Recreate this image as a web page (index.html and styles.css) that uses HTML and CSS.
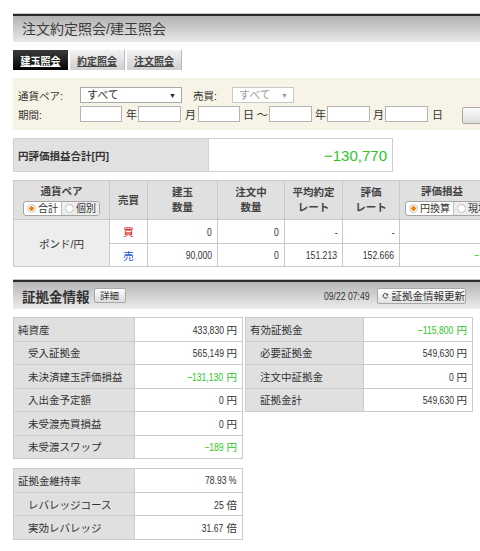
FILE: index.html
```html
<!DOCTYPE html>
<html lang="ja">
<head>
    <meta charset="UTF-8">
    <meta name="viewport" content="width=device-width, initial-scale=1.0">
    <title>注文約定照会/建玉照会</title>
    <link rel="stylesheet" href="styles.css">
</head>
<body>
    <div class="page">
        <!-- Title -->
        <div class="title-bar">
            <h1>注文約定照会/建玉照会</h1>
        </div>

        <!-- Tabs -->
        <div class="tabs">
            <a class="tab active">建玉照会</a>
            <a class="tab">約定照会</a>
            <a class="tab">注文照会</a>
        </div>

        <!-- Search conditions -->
        <div class="filter">
            <div class="filter-row">
                <span class="filter-label">通貨ペア:</span>
                <span class="select pair-select">すべて<span class="arrow">▼</span></span>
                <span class="filter-label side-label">売買:</span>
                <span class="select side-select disabled">すべて<span class="arrow">▼</span></span>
            </div>
            <div class="filter-row">
                <span class="filter-label">期間:</span>
                <span class="date-input w42"></span><span class="unit u16">年</span>
                <span class="date-input w43"></span><span class="unit u17">月</span>
                <span class="date-input w42"></span><span class="unit u29">日 ～</span>
                <span class="date-input w43"></span><span class="unit u15">年</span>
                <span class="date-input w43"></span><span class="unit u15">月</span>
                <span class="date-input w43"></span><span class="unit u34">日</span>
                <span class="search-btn"></span>
            </div>
        </div>

        <!-- Total P/L -->
        <div class="total">
            <div class="total-label">円評価損益合計[円]</div>
            <div class="total-value">−130,770</div>
        </div>

        <!-- Positions -->
        <table class="positions">
            <colgroup>
                <col style="width: 96px">
                <col style="width: 38px">
                <col style="width: 70px">
                <col style="width: 67px">
                <col style="width: 58px">
                <col style="width: 57px">
                <col style="width: 85px">
            </colgroup>
            <tr class="head">
                <th>
                    <div>通貨ペア</div>
                    <span class="seg"><span class="seg-item on"><i class="radio"></i>合計</span><span class="seg-item"><i class="radio"></i>個別</span></span>
                </th>
                <th>売買</th>
                <th>建玉<br>数量</th>
                <th>注文中<br>数量</th>
                <th>平均約定<br>レート</th>
                <th>評価<br>レート</th>
                <th>
                    <div>評価損益</div>
                    <span class="seg"><span class="seg-item on"><i class="radio"></i>円換算</span><span class="seg-item"><i class="radio"></i>現地</span></span>
                </th>
            </tr>
            <tr class="row1">
                <td class="pair" rowspan="2">ポンド/円</td>
                <td class="buy">買</td>
                <td class="num"><span class="n">0</span></td>
                <td class="num"><span class="n">0</span></td>
                <td class="num"><span class="n">-</span></td>
                <td class="num"><span class="n">-</span></td>
                <td class="num"></td>
            </tr>
            <tr class="row2">
                <td class="sell">売</td>
                <td class="num"><span class="n">90,000</span></td>
                <td class="num"><span class="n">0</span></td>
                <td class="num"><span class="n">151.213</span></td>
                <td class="num"><span class="n">152.666</span></td>
                <td class="num plus"><span class="n">−</span></td>
            </tr>
        </table>

        <!-- Margin info header -->
        <div class="section-bar">
            <div class="bar-inner">
                <h2>証拠金情報</h2>
                <span class="small-btn">詳細</span>
                <span class="updated"><span class="n">09/22 07:49</span></span>
                <span class="refresh-btn">
                    <svg width="10" height="10" viewBox="0 0 10 10">
                        <path d="M7.9 2.3 A3.6 3.6 0 1 0 8.7 6" fill="none" stroke="#3a3a3a" stroke-width="1.5"/>
                        <path d="M9.4 0.6 L9.4 4.3 L5.7 4.3 Z" fill="#3a3a3a"/>
                    </svg>
                    証拠金情報更新
                </span>
            </div>
        </div>

        <!-- Margin tables -->
        <div class="margin-area">
            <div class="margin-left">
                <table class="info w-left">
                    <tr><td class="label">純資産</td><td class="value"><span class="n">433,830</span> 円</td></tr>
                    <tr><td class="label sub">受入証拠金</td><td class="value"><span class="n">565,149</span> 円</td></tr>
                    <tr><td class="label sub">未決済建玉評価損益</td><td class="value plus"><span class="n">−131,130</span> 円</td></tr>
                    <tr><td class="label sub">入出金予定額</td><td class="value"><span class="n">0</span> 円</td></tr>
                    <tr><td class="label sub">未受渡売買損益</td><td class="value"><span class="n">0</span> 円</td></tr>
                    <tr><td class="label sub">未受渡スワップ</td><td class="value plus"><span class="n">−189</span> 円</td></tr>
                </table>
                <table class="info w-left rate-table">
                    <tr><td class="label">証拠金維持率</td><td class="value"><span class="n">78.93 %</span></td></tr>
                    <tr><td class="label sub">レバレッジコース</td><td class="value"><span class="n">25</span> 倍</td></tr>
                    <tr><td class="label sub">実効レバレッジ</td><td class="value"><span class="n">31.67</span> 倍</td></tr>
                </table>
            </div>
            <table class="info w-right">
                <tr><td class="label">有効証拠金</td><td class="value plus"><span class="n">−115,800</span> 円</td></tr>
                <tr><td class="label sub">必要証拠金</td><td class="value"><span class="n">549,630</span> 円</td></tr>
                <tr><td class="label sub">注文中証拠金</td><td class="value"><span class="n">0</span> 円</td></tr>
                <tr><td class="label sub">証拠金計</td><td class="value"><span class="n">549,630</span> 円</td></tr>
            </table>
        </div>
    </div>
</body>
</html>
```

FILE: styles.css
```css
/* General Layout */
html {
    overflow: hidden;
}

body {
    margin: 0;
    font-family: "Liberation Sans", "Noto Sans CJK JP", sans-serif;
    font-size: 10.5px;
    color: #333;
    background-color: #fff;
}

.page {
    width: 530px;
    padding: 14px 0 0 13px;
}

/* narrow digits, like the bitmap font of the original */
.n {
    display: inline-block;
    transform: scaleX(0.82);
    transform-origin: right center;
}

/* Title bar */
.title-bar {
    height: 26px;
    border-top: 2px solid #2b2b2b;
    box-shadow: 0 -1px 0 #c4c4c4;
    background: linear-gradient(#b2b2b2, #e8e8e8);
}

.title-bar h1 {
    margin: 0;
    padding-left: 9px;
    font-size: 14px;
    font-weight: normal;
    line-height: 26px;
    color: #3a3a3a;
}

/* Tabs */
.tabs {
    display: flex;
    gap: 2px;
    height: 20px;
    margin-top: 8px;
}

.tab {
    width: 55px;
    display: flex;
    align-items: center;
    justify-content: center;
    font-size: 10px;
    font-weight: bold;
    text-decoration: underline;
    color: #444;
    background: linear-gradient(#f2f2f2, #d0d0d0);
    border-right: 1px solid #b8b8b8;
    box-sizing: border-box;
}

.tab.active {
    color: #fff;
    background: linear-gradient(#3a3a3a, #050505);
    border-right: none;
}

/* Search conditions */
.filter {
    height: 52px;
    margin-top: 8px;
    padding: 9px 0 0 5px;
    box-sizing: border-box;
    background-color: #f7f4e7;
}

.filter-row {
    display: flex;
    align-items: center;
    height: 16px;
    margin-bottom: 3px;
}

.filter-label {
    width: 62px;
}

.side-label {
    width: 39px;
    margin-left: 11px;
}

.select {
    position: relative;
    height: 16px;
    line-height: 15px;
    padding-left: 6px;
    box-sizing: border-box;
    border: 1px solid #a9a9a9;
    background-color: #fff;
    font-size: 11px;
}

.pair-select {
    width: 102px;
}

.side-select {
    width: 62px;
}

.select .arrow {
    position: absolute;
    right: 5px;
    top: 0;
    font-size: 7px;
    color: #222;
}

.select.disabled {
    color: #a0a0a0;
    border-color: #c8c8c8;
}

.select.disabled .arrow {
    color: #999;
}

.date-input {
    height: 16px;
    box-sizing: border-box;
    border: 1px solid #b4b4b4;
    background-color: #fff;
}

.w42 { width: 42px; }
.w43 { width: 43px; }

.unit {
    padding-left: 4px;
    box-sizing: border-box;
    font-size: 11px;
}

.u15 { width: 15px; padding-left: 3px; }
.u16 { width: 16px; }
.u17 { width: 17px; }
.u29 { width: 29px; padding-left: 3px; }
.u34 { width: 34px; }

.search-btn {
    width: 60px;
    height: 17px;
    margin-top: 2px;
    box-sizing: border-box;
    border: 1px solid #a8a8a8;
    border-radius: 2px;
    background: linear-gradient(#fbfbfb, #dedede);
}

/* Total P/L */
.total {
    display: flex;
    height: 34px;
    margin-top: 8px;
}

.total-label {
    width: 196px;
    display: flex;
    align-items: center;
    padding-left: 4px;
    box-sizing: border-box;
    background-color: #e1e1e1;
    border: 1px solid #d2d2d2;
    font-weight: bold;
}

.total-value {
    width: 184px;
    display: flex;
    align-items: center;
    justify-content: flex-end;
    padding-right: 5px;
    box-sizing: border-box;
    border: 1px solid #cfcfcf;
    border-left: none;
    font-size: 15px;
    color: #2fc41f;
}

/* Positions table */
.positions {
    margin-top: 8px;
    border-collapse: collapse;
    table-layout: fixed;
    width: 471px;
}

.positions th,
.positions td {
    border: 1px solid #c9c9c9;
    padding: 0 5px;
}

.positions th {
    height: 38px;
    background-color: #e0e0e0;
    font-weight: bold;
    line-height: 15px;
    color: #444;
}

.positions .row1 td {
    height: 23px;
}

.positions .row2 td {
    height: 22px;
}

.positions td {
    background-color: #fff;
}

.positions td.pair {
    background-color: #ededed;
    text-align: center;
}

.buy {
    text-align: center;
    color: #d00000;
}

.sell {
    text-align: center;
    color: #1a4fd6;
}

.num {
    text-align: right;
}

.plus {
    color: #2fc41f;
}

/* Radio switch */
.seg {
    display: inline-flex;
    height: 13px;
    margin-top: 2px;
    border: 1px solid #a5a5a5;
    border-radius: 3px;
    overflow: hidden;
    background-color: #fff;
    white-space: nowrap;
}

.seg-item {
    display: flex;
    align-items: center;
    gap: 2px;
    padding: 0 3px;
    font-size: 10px;
    font-weight: normal;
    line-height: 13px;
    color: #333;
}

.seg-item + .seg-item {
    border-left: 1px solid #bdbdbd;
    background-color: #ececec;
}

.radio {
    width: 7px;
    height: 7px;
    border-radius: 50%;
    border: 1px solid #c4c4c4;
    background-color: #fff;
}

.on .radio {
    background: radial-gradient(circle, #f08400 0, #f08400 2px, #fff 2.5px);
}

/* Section header */
.section-bar {
    height: 27px;
    margin-top: 13px;
    border-top: 2px solid #2b2b2b;
    box-shadow: 0 -1px 0 #c4c4c4;
    background: linear-gradient(#b6b6b6, #ececec);
}

.bar-inner {
    width: 453px;
    height: 27px;
    display: flex;
    align-items: center;
}

.section-bar h2 {
    margin: 0 4px 0 9px;
    font-size: 13.5px;
    font-weight: bold;
    color: #333;
}

.small-btn {
    width: 32px;
    height: 15px;
    box-sizing: border-box;
    border: 1px solid #a9a9a9;
    border-radius: 2px;
    background: linear-gradient(#fdfdfd, #dcdcdc);
    font-size: 9.5px;
    line-height: 13px;
    text-align: center;
}

.updated {
    margin-left: auto;
    margin-right: 8px;
}

.refresh-btn {
    width: 89px;
    height: 16px;
    display: flex;
    align-items: center;
    gap: 3px;
    padding-left: 4px;
    box-sizing: border-box;
    border: 1px solid #a9a9a9;
    border-radius: 2px;
    background: linear-gradient(#ffffff, #e2e2e2);
    white-space: nowrap;
}

/* Margin tables */
.margin-area {
    display: flex;
    align-items: flex-start;
    gap: 2px;
    margin-top: 8px;
}

.info {
    border-collapse: collapse;
    table-layout: fixed;
}

.info tr {
    height: 23.5px;
}

.info td {
    border: 1px solid #cbcbcb;
    padding: 0;
}

.w-left {
    width: 230px;
}

.w-left .label {
    width: 116px;
}

.w-right {
    width: 228px;
}

.w-right .label {
    width: 113px;
}

.rate-table {
    margin-top: 9px;
}

.rate-table tr {
    height: 23.7px;
}

.info .label {
    padding-left: 4px;
    background-color: #e0e0e0;
    white-space: nowrap;
}

.info .label.sub {
    padding-left: 14px;
}

.info .value {
    padding-right: 5px;
    text-align: right;
    background-color: #fff;
    white-space: nowrap;
}

.info .value.plus {
    color: #2fc41f;
}
```
